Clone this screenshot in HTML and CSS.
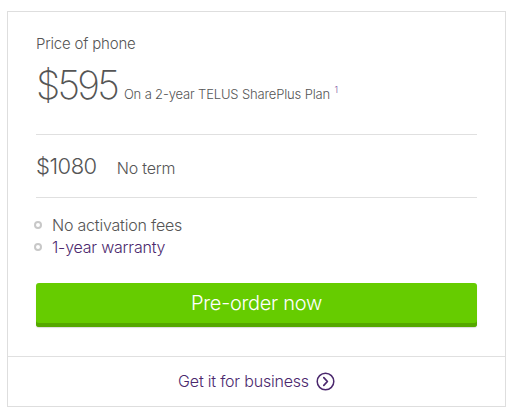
FILE: index.html
```html
<!DOCTYPE html>
<html>
<head>
<meta charset="utf-8">
<link rel="stylesheet" href="styles.css">
</head>
<body>
<div class="card">
  <div class="main">
    <div class="label">Price of phone</div>
    <div class="price-row">
      <span class="price">$595</span>
      <span class="plan">On a 2-year TELUS SharePlus Plan <sup class="note">1</sup></span>
    </div>
    <div class="alt-row">
      <span class="alt-price">$1080</span>
      <span class="alt-term">No term</span>
    </div>
    <ul class="features">
      <li>No activation fees</li>
      <li class="link">1-year warranty</li>
    </ul>
    <button class="cta">Pre-order now</button>
  </div>
  <div class="footer">
    <span class="biz">Get it for business</span>
    <svg class="chev" width="19" height="19" viewBox="0 0 19 19"><circle cx="9.5" cy="9.5" r="8.3" fill="none" stroke="#4b286d" stroke-width="1.5"/><path d="M7.8 5.6 L11.4 9.5 L7.8 13.4" fill="none" stroke="#4b286d" stroke-width="1.7" stroke-linecap="round" stroke-linejoin="round"/></svg>
  </div>
</div>
</body>
</html>
```
FILE: styles.css
```css
*, *::before, *::after { box-sizing: border-box; }
body {
  margin: 0;
  background: #fff;
  font-family: Inter, "Liberation Sans", Arial, sans-serif;
  font-weight: 300;
  color: #555;
}
.card {
  margin: 11px 0 0 7px;
  width: 499px;
  height: 396px;
  border: 1px solid #dedede;
  display: flex;
  flex-direction: column;
}
.main {
  padding: 23px 28px 0 28px;
  height: 344px;
  flex: 0 0 auto;
}
.label {
  font-size: 15px;
  line-height: 18px;
  letter-spacing: -0.2px;
}
.price-row {
  margin-top: 10px;
  display: flex;
  align-items: baseline;
  height: 72px;
  border-bottom: 1px solid #e0e0e0;
}
.price {
  font-size: 39px;
  line-height: 44px;
  font-weight: 200;
  letter-spacing: -2.8px;
}
.plan {
  font-size: 13px;
  margin-left: 7px;
  letter-spacing: -0.15px;
}
.note {
  color: #7c53a5;
  font-size: 9px;
  vertical-align: 6px;
  margin-left: 1px;
}
.alt-row {
  display: flex;
  align-items: baseline;
  height: 63px;
  padding-top: 18px;
  border-bottom: 1px solid #e0e0e0;
}
.alt-price {
  font-size: 22px;
  line-height: 26px;
  letter-spacing: -0.5px;
}
.alt-term {
  font-size: 16px;
  margin-left: 20px;
  letter-spacing: -0.2px;
}
.features {
  list-style: none;
  margin: 16px 0 0 0;
  padding: 0;
}
.features li {
  font-size: 16px;
  line-height: 22px;
  display: flex;
  align-items: center;
  letter-spacing: -0.2px;
}
.features li::before {
  content: "";
  flex: 0 0 auto;
  width: 8px;
  height: 8px;
  border: 2px solid #c8c8c8;
  border-radius: 50%;
  margin: 0 10px 0 -2px;
}
.features li.link { color: #4b286d; }
.cta {
  display: block;
  margin-top: 25px;
  width: 100%;
  height: 44px;
  border: none;
  border-radius: 3px;
  background: #66cc00;
  box-shadow: inset 0 -4px 0 #55a800, 0 1px 1px #ddd;
  color: #fff;
  font-family: inherit;
  font-weight: 300;
  font-size: 20px;
  letter-spacing: -0.3px;
  padding: 0 0 4px 0;
}
.footer {
  flex: 1;
  border-top: 1px solid #e0e0e0;
  display: flex;
  align-items: center;
  justify-content: center;
  gap: 7px;
  padding-bottom: 1px;
}
.biz {
  font-size: 16px;
  color: #4b286d;
  letter-spacing: -0.2px;
}
.chev { display: block; }
```
